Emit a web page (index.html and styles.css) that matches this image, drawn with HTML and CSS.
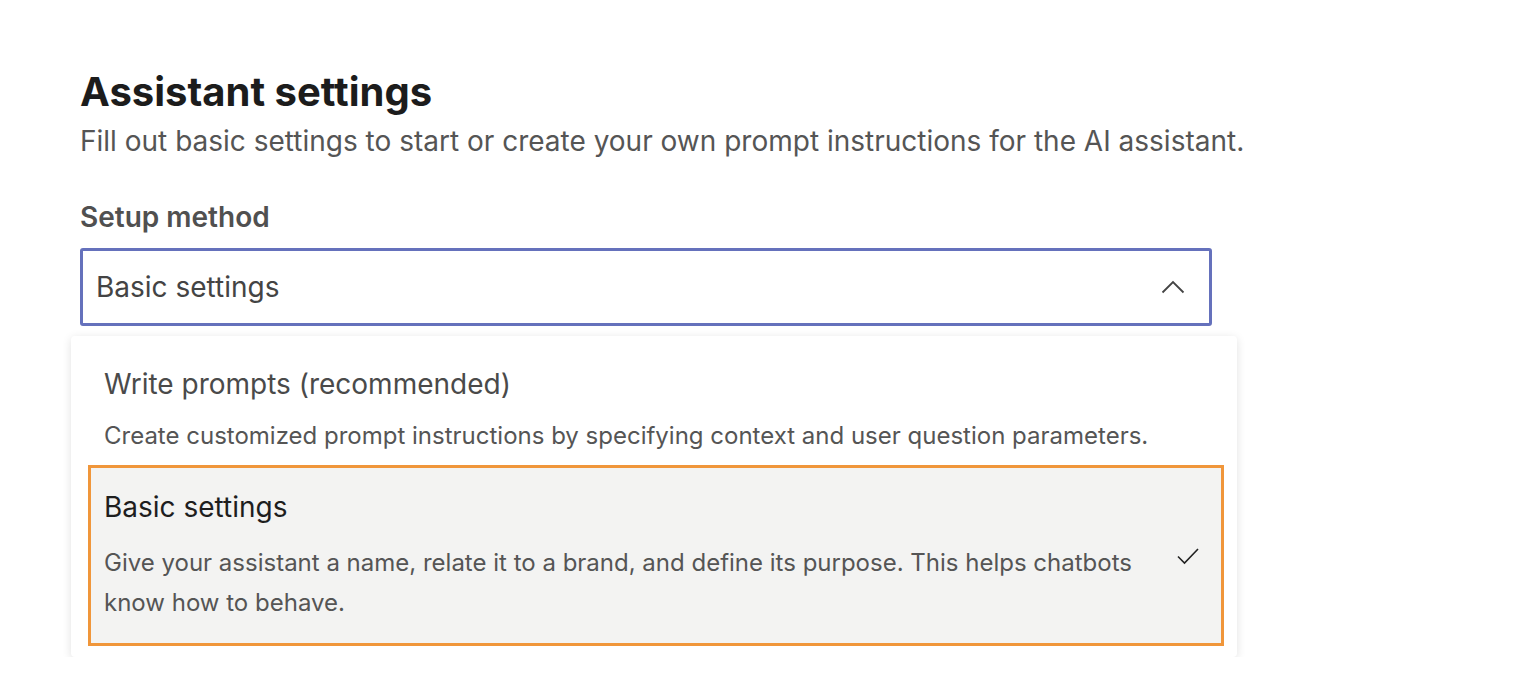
FILE: index.html
```html
<!DOCTYPE html>
<html lang="en">

<head>
    <meta charset="UTF-8">
    <title>Assistant settings</title>
    <link rel="stylesheet" href="styles.css">
</head>

<body>
    <main class="page">
        <h1 class="title">Assistant settings</h1>
        <p class="subtitle">Fill out basic settings to start or create your own prompt instructions for the AI assistant.</p>

        <label class="field-label">Setup method</label>
        <div class="select">
            <span class="select-value">Basic settings</span>
            <svg class="chevron" width="24" height="14" viewBox="0 0 24 14">
                <path d="M1.5 12.5 L12 2 L22.5 12.5" fill="none" stroke="#444" stroke-width="1.8" />
            </svg>
        </div>

        <div class="dropdown">
            <div class="option">
                <div class="option-text">
                    <div class="option-title">Write prompts (recommended)</div>
                    <div class="option-desc">Create customized prompt instructions by specifying context and user question parameters.</div>
                </div>
            </div>
            <div class="option selected">
                <div class="option-text">
                    <div class="option-title">Basic settings</div>
                    <div class="option-desc">Give your assistant a name, relate it to a brand, and define its purpose. This helps chatbots know how to behave.</div>
                </div>
                <svg class="check" width="22" height="18" viewBox="0 0 22 18">
                    <path d="M1 9.5 L7.5 16 L21 2" fill="none" stroke="#222" stroke-width="1.6" />
                </svg>
            </div>
        </div>
    </main>
</body>

</html>
```

FILE: styles.css
```css
body {
    margin: 0;
    font-family: Inter, "Noto Sans", sans-serif;
    background: white;
    color: #444;
}

.page {
    padding: 70px 0 0 80px;
}

.title {
    margin: 0;
    font-size: 40px;
    line-height: 44px;
    font-weight: 700;
    color: #1c1c1c;
}

.subtitle {
    margin: 11px 0 0;
    font-size: 28px;
    line-height: 32px;
    color: #555;
    white-space: nowrap;
}

.field-label {
    display: block;
    margin-top: 44px;
    font-size: 28px;
    line-height: 32px;
    font-weight: 600;
    color: #505050;
}

.select {
    margin-top: 15px;
    width: 1132px;
    box-sizing: border-box;
    height: 78px;
    border: 3px solid #6571bc;
    border-radius: 3px;
    display: flex;
    align-items: center;
    justify-content: space-between;
    padding: 0 24px 0 13px;
}

.select-value {
    font-size: 28px;
    color: #444;
}

.dropdown {
    margin: 10px 0 0 -9px;
    width: 1166px;
    background: white;
    border-radius: 4px;
    box-shadow: 0 2px 10px rgba(0, 0, 0, 0.12);
    padding: 6px 0 11px;
}

.option {
    display: flex;
    align-items: center;
    justify-content: space-between;
    padding: 24px 24px 0 33px;
}

.option-title {
    font-size: 28px;
    line-height: 36px;
    color: #4a4a4a;
}

.option-desc {
    margin-top: 14px;
    font-size: 24px;
    line-height: 40px;
    color: #555;
}

.option.selected {
    margin: 9px 13px 0 17px;
    padding: 21px 22px 20px 13px;
    background: #f3f3f2;
    border: 3px solid #f0963a;
}

.option.selected .option-title {
    color: #1e1e1e;
}

.option.selected .option-desc {
    margin-top: 18px;
}

.option.selected .option-text {
    width: 1040px;
}
```
